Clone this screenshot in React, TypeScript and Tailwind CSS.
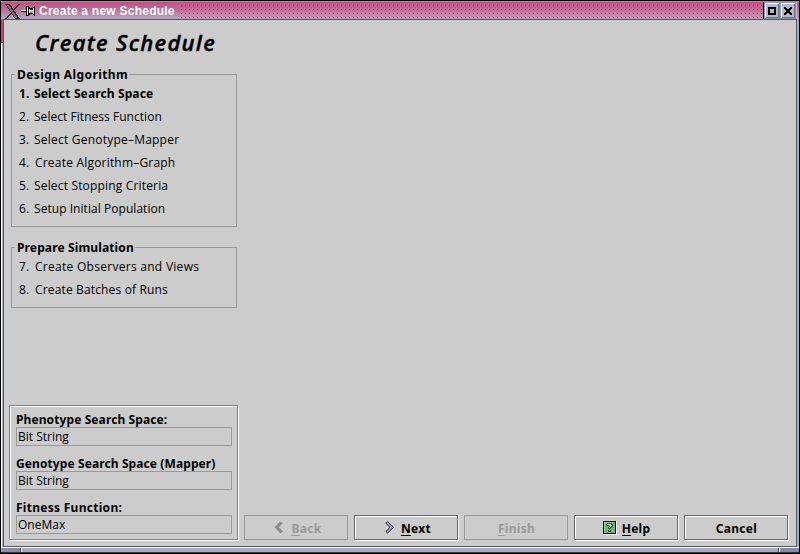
import React from 'react';

type Label = { text: string; track?: string };

const design: Label[] = [
  { text: 'Select Search Space', track: 'tracking-[0.12px]' },
  { text: 'Select Fitness Function', track: 'tracking-[0.04px]' },
  { text: 'Select Genotype–Mapper', track: 'tracking-[0.22px]' },
  { text: 'Create Algorithm–Graph', track: 'pl-px tracking-[0.2px]' },
  { text: 'Select Stopping Criteria', track: 'tracking-[0.17px]' },
  { text: 'Setup Initial Population', track: 'tracking-[0.05px]' },
];

const simulation: Label[] = [
  { text: 'Create Observers and Views', track: 'pl-px tracking-[0.28px]' },
  { text: 'Create Batches of Runs', track: 'pl-px tracking-[0.15px]' },
];

function Group({ title, items, start, className, titleTrack, active }: { title: string; items: Label[]; start: number; className: string; titleTrack: string; active?: number }) {
  return (
    <section className={'relative w-[226px] border border-[#999999] ' + className}>
      <h2 className={'absolute left-[3px] top-[-9px] whitespace-nowrap bg-[#cccccc] pl-[2px] pr-px font-bold leading-[17px] ' + titleTrack}>{title}</h2>
      <ol className="pl-[7px]">
        {items.map((it, i) => {
          const n = start + i;
          return (
            <li key={n} className={'flex h-[23px] leading-[17px] ' + (n === active ? 'font-bold' : "font-['Open_Sans',sans-serif]")}>
              <span className="w-[15px]">{n}.</span>
              <span className={'whitespace-nowrap ' + (it.track ?? '')}>{it.text}</span>
            </li>
          );
        })}
      </ol>
    </section>
  );
}

function Field({ label, value, track }: { label: string; value: string; track: string }) {
  return (
    <div className="h-[44px]">
      <div className={'h-[16px] whitespace-nowrap font-bold leading-[17px] ' + track}>{label}</div>
      <div className="h-[19px] w-[216px] border border-[#999999] pl-px font-['Open_Sans',sans-serif] leading-[17px]">{value}</div>
    </div>
  );
}

function Button({ label, disabled, icon, plain, className = '' }: { label: string; disabled?: boolean; icon?: React.ReactNode; plain?: boolean; className?: string }) {
  return (
    <button
      className={
        'flex h-[25px] w-[104px] items-center justify-center border font-bold tracking-[0.3px] ' +
        (disabled ? 'border-[#999999] text-[#999999] ' : 'border-[#666666] text-black shadow-[1px_1px_0_#fff,inset_1px_1px_0_#fff] ') +
        className
      }
    >
      {icon}
      <span className="mt-[2px] h-[17px] pl-px leading-[17px]">
        {plain ? label : (
          <>
            <span className="inline-block h-[16px] border-b border-current">{label[0]}</span>
            {label.slice(1)}
          </>
        )}
      </span>
    </button>
  );
}

function WindowButton({ children }: { children: React.ReactNode }) {
  return (
    <span className="flex h-[17px] w-[16px] items-center justify-center border border-[#9094a8] bg-[#b4b8cc] shadow-[inset_1px_1px_0_#fff,inset_-1px_-1px_0_#6c6f80]">
      {children}
    </span>
  );
}

function TitleBar() {
  return (
    <header className="flex h-[18px] items-start bg-linear-to-b from-[#c04c80] via-[#b8709a] to-[#b0a8c0] shadow-[inset_0_1px_0_#d07aa0]">
      <svg className="mt-[3px] ml-[4px] shrink-0" width="16" height="15" viewBox="0 0 16 15" shapeRendering="crispEdges">
        <path d="M13 0h2L2 15H0z" fill="#333" />
        <path d="M0 0h5l10 15h-5z" fill="#333" />
        <path d="M1.5 1h2.5l8.5 13h-2z" fill="#707070" />
      </svg>
      <svg className="mt-[5px] shrink-0" width="15" height="10" viewBox="0 0 15 10" shapeRendering="crispEdges">
        <path d="M0 4h6v1H0z" fill="#fff" />
        <path d="M0 5h6v1H0z" fill="#000" />
        <path d="M5 0h3v1h1v1h3V1h1V0h1v10h-1V9h-1V8H9v1H8v1H5z" fill="#000" />
        <path d="M6 1h1v8H6zM8 3h1v4H8zM9 4h3v1H9zM12 2h1v6h-1z" fill="#fff" />
        <path d="M9 5h3v2H9z" fill="#aaa" />
      </svg>
      <span className="ml-[3px] w-[141px] whitespace-nowrap pt-px font-['Liberation_Sans',sans-serif] text-[12px] font-bold leading-[18px] tracking-[0.24px] text-white">
        Create a new Schedule
      </span>
      <span className="mt-[3px] h-[14px] w-[583px] bg-[radial-gradient(circle_at_0.5px_0.5px,#f0609c_0.7px,transparent_0.8px),radial-gradient(circle_at_1.5px_1.5px,#6c3c60_0.7px,transparent_0.8px)] bg-[length:4px_4px]" />
      <span className="mt-px flex h-[17px] w-[34px] shrink-0 border-l border-black bg-[#b4b8cc]">
        <WindowButton>
          <svg width="8" height="8" viewBox="0 0 8 8" shapeRendering="crispEdges">
            <path d="M0 0h8v8H0zM2 2v4h4V2z" fillRule="evenodd" fill="#000" />
          </svg>
        </WindowButton>
        <WindowButton>
          <svg width="8" height="8" viewBox="0 0 8 8" shapeRendering="crispEdges">
            <path d="M0 0h2v1h1v1h2V1h1V0h2v2H7v1H6v2h1v1h1v2H6V7H5V6H3v1H2v1H0V6h1V5h1V3H1V2H0z" fill="#000" />
          </svg>
        </WindowButton>
      </span>
    </header>
  );
}

function Chevron({ back }: { back?: boolean }) {
  return (
    <svg className="shrink-0" width="10" height="13" viewBox="0 0 10 13">
      {back ? (
        <path d="M6 .5 9 2 5 6.3 9 10.5 6.5 12.5.5 6.3z" fill="#8c8c8c" />
      ) : (
        <>
          <path d="M3.5 1.7 9.5 7 3.5 12.8" fill="none" stroke="#fff" />
          <path d="M2.7.7 8.6 6.3 2.7 12 .8 10.4 5 6.3.8 2.2z" fill="#9999cc" stroke="#202048" strokeWidth=".9" />
        </>
      )}
    </svg>
  );
}

function HelpIcon() {
  return (
    <svg className="shrink-0" width="14" height="14" viewBox="0 0 14 14" shapeRendering="crispEdges">
      <path d="M0 0h14v14H0z" fill="#fff" />
      <path d="M0 0h13v13H0z" fill="#111" />
      <path d="M1 1h11v11H1z" fill="#78b080" />
      <path d="M1 1h9v1H2v8H1z" fill="#a4d4a8" />
      <path d="M4 2h5v1h1v3H9v1H8v1H5V6h1V5h1V4H6v1H3V3h1zM5 9h3v2H5z" fill="#2c5c38" />
      <path d="M4 3h4v1h1v1H8v1H7v1H6V6h1V4H4zM6 9h1v1H6z" fill="#c4e8c4" />
    </svg>
  );
}

export default function App() {
  return (
    <div className="flex h-[554px] w-[800px] flex-col overflow-hidden border border-black bg-[#a8acc0] font-['Noto_Sans',sans-serif] text-[12px] text-black">
      <TitleBar />
      <div className="flex h-[528px] shrink-0">
        <div className="w-[2px] shrink-0">
          <div className="h-[23px] bg-[#c04478]" />
          <div className="h-px bg-black" />
          <div className="h-[504px] border-l border-white bg-[#a8acc0]" />
        </div>
        <main className="flex h-[528px] w-[794px] shrink-0 border border-[#555563] bg-[#cccccc]">
          <aside className="flex w-[235px] shrink-0 flex-col pl-[5px]">
            <h1 className="h-[53px] whitespace-nowrap pl-[26px] pt-[7px] font-['Open_Sans',sans-serif] text-[22px] font-semibold italic leading-[30px] tracking-[1.28px] [-webkit-text-stroke:0.4px_#000]">
              Create Schedule
            </h1>
            <div className="flex flex-col gap-[20px] pl-[2px] pt-px">
              <Group title="Design Algorithm" titleTrack="tracking-[0.4px]" items={design} start={1} active={1} className="h-[153px] pt-[10px]" />
              <Group title="Prepare Simulation" titleTrack="tracking-[0.13px]" items={simulation} start={7} className="h-[61px] pt-[10px]" />
            </div>
            <div className="mt-auto mb-[6px] h-[135px] w-[229px] shrink-0 border border-[#808080] pl-[6px] pt-[5px] shadow-[1px_1px_0_#fff,inset_1px_1px_0_#fff]">
              <Field label="Phenotype Search Space:" value="Bit String" track="tracking-[0.1px]" />
              <Field label="Genotype Search Space (Mapper)" value="Bit String" track="tracking-[0.1px]" />
              <Field label="Fitness Function:" value="OneMax" track="tracking-[0.28px]" />
            </div>
          </aside>
          <nav className="mb-[6px] ml-[5px] flex gap-[6px] self-end">
            <Button label="Back" disabled icon={<span className="mr-[6px]"><Chevron back /></span>} className="pl-[4px]" />
            <Button label="Next" icon={<span className="mr-[5px]"><Chevron /></span>} className="pl-[4px]" />
            <Button label="Finish" disabled />
            <Button label="Help" icon={<span className="mr-[4px]"><HelpIcon /></span>} className="pl-px" />
            <Button label="Cancel" plain />
          </nav>
        </main>
        <div className="w-[2px] shrink-0 bg-[#a8acc0]" />
      </div>
      <footer className="flex h-[6px] shrink-0 border-b border-[#333340] border-t border-t-white">
        <span className="ml-px w-[18px] bg-[#888ca0]" />
        <span className="w-px bg-[#444450]" />
        <span className="w-px bg-white" />
        <span className="flex-1 bg-[#a8acc0]" />
        <span className="w-px bg-[#444450]" />
        <span className="w-px bg-white" />
        <span className="w-[19px] bg-[#888ca0]" />
      </footer>
    </div>
  );
}
